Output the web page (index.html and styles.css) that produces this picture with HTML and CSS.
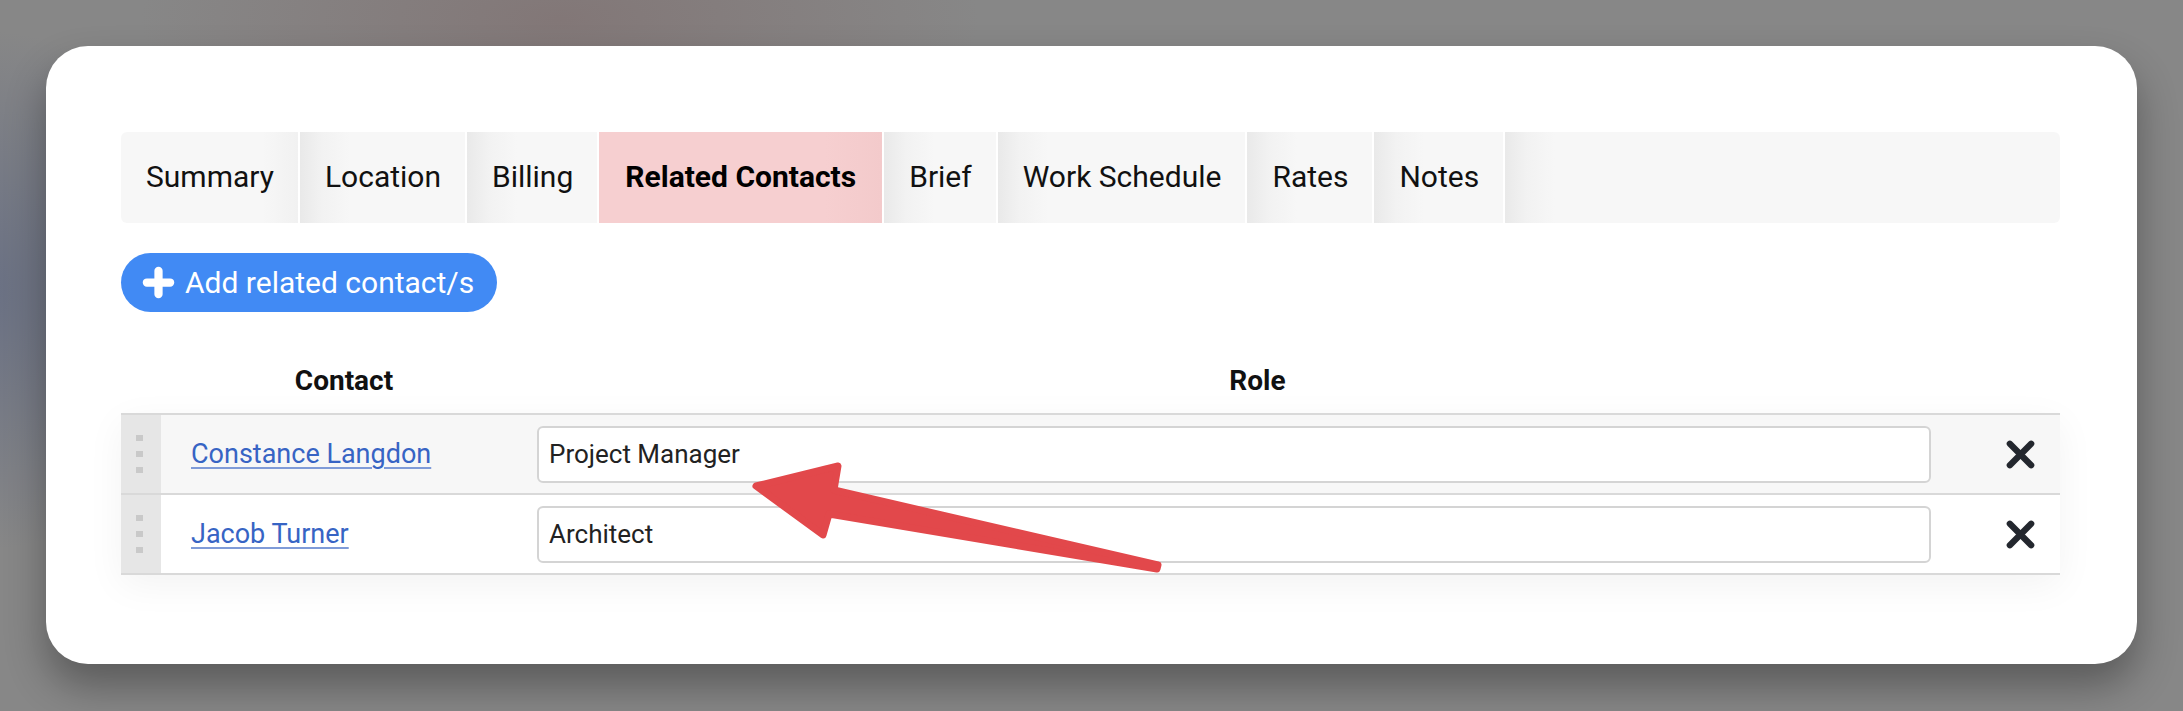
FILE: index.html
```html
<!DOCTYPE html>
<html>
<head>
<meta charset="utf-8">
<link rel="stylesheet" href="styles.css">
</head>
<body>
<div class="card">
  <nav class="tabs">
    <div class="tab first">Summary</div>
    <div class="tab">Location</div>
    <div class="tab">Billing</div>
    <div class="tab active">Related Contacts</div>
    <div class="tab">Brief</div>
    <div class="tab">Work Schedule</div>
    <div class="tab">Rates</div>
    <div class="tab">Notes</div>
    <div class="tab filler"></div>
  </nav>

  <button class="add-btn">
    <svg class="plus" viewBox="0 0 34 34" width="33" height="33"><path d="M17 5 V29 M5 17 H29" stroke="#fff" stroke-width="8.5" stroke-linecap="round" fill="none"/></svg>
    <span>Add related contact/s</span>
  </button>

  <div class="table">
    <div class="head">
      <div></div>
      <div class="th">Contact</div>
      <div class="th">Role</div>
      <div></div>
    </div>
    <div class="rows">
      <div class="row odd">
        <div class="handle"><i></i><i></i><i></i></div>
        <div class="contact"><a href="#">Constance Langdon</a></div>
        <div class="role"><input class="role-input" type="text" value="Project Manager"></div>
        <div class="remove"><svg viewBox="0 0 32 32" width="31" height="31"><path d="M5 5 L27 27 M27 5 L5 27" stroke="#23272e" stroke-width="6.5" stroke-linecap="round" fill="none"/></svg></div>
      </div>
      <div class="row">
        <div class="handle"><i></i><i></i><i></i></div>
        <div class="contact"><a href="#">Jacob Turner</a></div>
        <div class="role"><input class="role-input" type="text" value="Architect"></div>
        <div class="remove"><svg viewBox="0 0 32 32" width="31" height="31"><path d="M5 5 L27 27 M27 5 L5 27" stroke="#23272e" stroke-width="6.5" stroke-linecap="round" fill="none"/></svg></div>
      </div>
    </div>
  </div>
</div>

<svg class="arrow" viewBox="0 0 2183 711" width="2183" height="711">
  <polygon points="756,486 838,466 834,490 1158,565 1157,569 829,514 823,535" fill="#e2484b" stroke="#e2484b" stroke-width="7" stroke-linejoin="round"/>
</svg>
</body>
</html>
```

FILE: styles.css
```css
html, body {
  margin: 0;
  padding: 0;
}
body {
  width: 2183px;
  height: 711px;
  box-sizing: border-box;
  padding: 46px 46px 0 46px;
  position: relative;
  overflow: hidden;
  font-family: Roboto, "Liberation Sans", sans-serif;
  background:
    radial-gradient(ellipse 260px 260px at -20px 290px, rgba(95,104,130,0.75), rgba(95,104,130,0) 100%),
    radial-gradient(ellipse 420px 160px at 560px 20px, rgba(128,112,112,0.7), rgba(128,112,112,0) 100%),
    #878787;
}
.card {
  height: 618px;
  box-sizing: border-box;
  background: #fff;
  border-radius: 42px;
  padding: 86px 77px 0 75px;
  box-shadow: 0 22px 40px rgba(0,0,0,0.33);
}
.tabs {
  display: flex;
  gap: 2px;
  height: 91px;
  border-radius: 6px;
  overflow: hidden;
}
.tab {
  display: flex;
  align-items: center;
  padding: 0 24px 3px 25px;
  font-size: 30px;
  color: #111;
  background: linear-gradient(to right, #e9e9e9 0px, #f2f2f2 22px, #f7f7f7 50px);
  white-space: nowrap;
}
.tab.first {
  background: linear-gradient(to right, #f7f7f7 80%, #f1f1f1 100%);
}
.tab.active {
  background: linear-gradient(to right, #f6cfd0 80%, #f3cacb 100%);
  font-weight: 700;
  color: #000;
  padding-left: 26px;
  padding-right: 26px;
}
.tab.filler {
  flex: 1;
  padding: 0;
}
.add-btn {
  display: flex;
  align-items: center;
  gap: 10px;
  margin-top: 30px;
  height: 59px;
  padding: 0 23px 0 21px;
  border: none;
  border-radius: 30px;
  background: #418af4;
  color: #fff;
  font-family: Roboto, "Liberation Sans", sans-serif;
  font-size: 30px;
  font-weight: 400;
}
.plus {
  display: block;
}
.table {
  margin-top: 18px;
}
.head, .row {
  display: grid;
  grid-template-columns: 40px 366px 1fr 72px;
}
.head {
  height: 83px;
  align-items: end;
}
.th {
  text-align: center;
  font-size: 28px;
  font-weight: 700;
  color: #111;
  line-height: 32px;
  padding-bottom: 16px;
}
.rows {
  border-top: 2px solid #d9d9d9;
  box-shadow: 0 10px 36px rgba(0,0,0,0.05);
}
.row {
  height: 78px;
  border-bottom: 2px solid #d9d9d9;
  background: #fff;
}
.row.odd {
  background: #f7f7f7;
}
.handle {
  background: #e6e6e6;
  display: flex;
  flex-direction: column;
  align-items: center;
  justify-content: center;
  gap: 10px;
  padding-right: 4px;
}
.handle i {
  display: block;
  width: 7px;
  height: 6px;
  background: #c9c9c9;
}
.contact {
  display: flex;
  align-items: center;
  padding-left: 30px;
}
.contact a {
  font-size: 27px;
  color: #3764c4;
  text-decoration: underline;
  text-decoration-thickness: 2px;
  text-underline-offset: 4px;
  text-decoration-color: #7f9bd8;
}
.role {
  display: flex;
  align-items: center;
  padding: 0 57px 0 10px;
}
.role-input {
  width: 100%;
  height: 57px;
  box-sizing: border-box;
  border: 2px solid #d4d4d4;
  border-radius: 6px;
  background: #fff;
  padding: 0 10px;
  font-family: Roboto, "Liberation Sans", sans-serif;
  font-size: 26px;
  color: #222;
  outline: none;
}
.remove {
  display: flex;
  align-items: center;
  justify-content: center;
  padding-right: 8px;
}
.arrow {
  position: absolute;
  left: 0;
  top: 0;
  pointer-events: none;
}
```
